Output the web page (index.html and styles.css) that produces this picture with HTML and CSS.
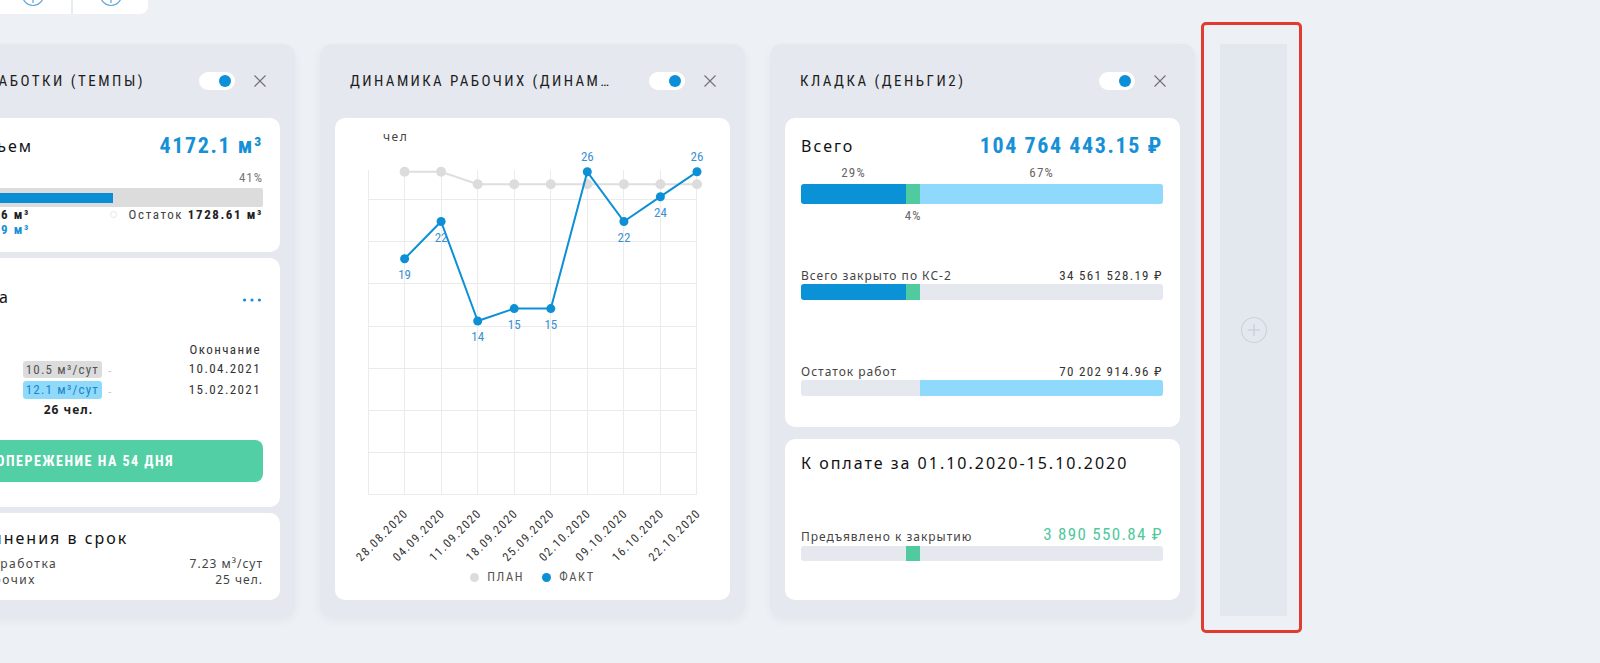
FILE: index.html
```html
<!DOCTYPE html>
<html lang="ru">
<head>
<meta charset="utf-8">
<title>Dashboard</title>
<link rel="stylesheet" href="styles.css">
</head>
<body>
<div class="toolbar">
  <div class="tb-btn tb-first">
    <svg width="24" height="24" viewBox="0 0 24 24"><circle cx="12" cy="12" r="10.5" fill="none" stroke="#5aa4d8" stroke-width="1.2"/><path d="M12 10v10" stroke="#5aa4d8" stroke-width="1.2"/></svg>
  </div>
  <div class="tb-sep"></div>
  <div class="tb-btn tb-second">
    <svg width="24" height="24" viewBox="0 0 24 24"><circle cx="12" cy="12" r="10.5" fill="none" stroke="#5aa4d8" stroke-width="1.2"/><path d="M12 10v10" stroke="#5aa4d8" stroke-width="1.2"/></svg>
  </div>
</div>

<main class="board">
  <!-- Widget 1 -->
  <section class="widget">
    <header class="w-head">
      <h2 class="w-title">ОБЪЕМ ВЫРАБОТКИ (ТЕМПЫ)</h2>
      <span class="toggle"><span class="knob"></span></span>
      <svg class="close" width="12" height="12" viewBox="0 0 12 12"><path d="M0.5 0.5L11.5 11.5M11.5 0.5L0.5 11.5" stroke="#707070" stroke-width="1.1"/></svg>
    </header>
    <div class="w-body">
      <div class="panel vol-panel">
        <div class="row-head">
          <span class="p-title">Общий объем</span>
          <span class="big-val">4172.1 м³</span>
        </div>
        <div class="pct-end">41%</div>
        <div class="vbar"><div class="vfill" style="width:58.6%"></div></div>
        <div class="vfoot">
          <div class="vf-left">
            <span class="vf-line">Выполнено <b>2443.46 м³</b></span>
            <span class="vf-line blue"><b>2443.49 м³</b></span>
          </div>
          <div class="vf-right">
            <span class="ring"></span>
            <span>Остаток <b>1728.61 м³</b></span>
          </div>
        </div>
      </div>

      <div class="panel plan-panel">
        <div class="row-head">
          <span class="p-title">Срок плана</span>
          <svg class="dots" width="18" height="4" viewBox="0 0 18 4"><circle cx="1.6" cy="2" r="1.6" fill="#1a8fd6"/><circle cx="9" cy="2" r="1.6" fill="#1a8fd6"/><circle cx="16.4" cy="2" r="1.6" fill="#1a8fd6"/></svg>
        </div>
        <div class="plan-grid">
          <span class="pg-label">Темп</span><span></span><span></span><span class="pg-date">Окончание</span>
          <span class="pg-label">План</span><span class="pill pill-gray">10.5 м³/сут</span><span class="pg-dash">-</span><span class="pg-date">10.04.2021</span>
          <span class="pg-label">Факт</span><span class="pill pill-blue">12.1 м³/сут</span><span class="pg-dash">-</span><span class="pg-date">15.02.2021</span>
          <span class="pg-label">Рабочих</span><span class="pg-people">26 чел.</span><span></span><span></span>
        </div>
        <div class="ahead-btn">ОПЕРЕЖЕНИЕ НА 54 ДНЯ</div>
      </div>

      <div class="panel need-panel">
        <div class="p-title">Для выполнения в срок</div>
        <div class="kv-list">
          <div class="kv-row"><span class="kv-key">Требуемая выработка</span><span>7.23 м³/сут</span></div>
          <div class="kv-row"><span class="kv-key">Требуется рабочих</span><span>25 чел.</span></div>
        </div>
      </div>
    </div>
  </section>

  <!-- Widget 2 -->
  <section class="widget">
    <header class="w-head">
      <h2 class="w-title w-title-long">ДИНАМИКА РАБОЧИХ (ДИНАМИКА)</h2>
      <span class="toggle"><span class="knob"></span></span>
      <svg class="close" width="12" height="12" viewBox="0 0 12 12"><path d="M0.5 0.5L11.5 11.5M11.5 0.5L0.5 11.5" stroke="#707070" stroke-width="1.1"/></svg>
    </header>
    <div class="w-body">
      <div class="panel chart-panel">
        <svg class="chart" width="395" height="452" viewBox="0 0 395 452">
          <text class="ax-unit" x="48" y="23">чел</text>
          <g class="grid" stroke="#ebebeb" stroke-width="1" shape-rendering="crispEdges">
            <line x1="33.5" y1="52" x2="33.5" y2="377"/>
            <line x1="69.5" y1="52" x2="69.5" y2="377"/>
            <line x1="106.5" y1="52" x2="106.5" y2="377"/>
            <line x1="142.5" y1="52" x2="142.5" y2="377"/>
            <line x1="179.5" y1="52" x2="179.5" y2="377"/>
            <line x1="215.5" y1="52" x2="215.5" y2="377"/>
            <line x1="252.5" y1="52" x2="252.5" y2="377"/>
            <line x1="288.5" y1="52" x2="288.5" y2="377"/>
            <line x1="325.5" y1="52" x2="325.5" y2="377"/>
            <line x1="361.5" y1="52" x2="361.5" y2="377"/>
            <line x1="33" y1="81.5" x2="362" y2="81.5"/>
            <line x1="33" y1="123.5" x2="362" y2="123.5"/>
            <line x1="33" y1="165.5" x2="362" y2="165.5"/>
            <line x1="33" y1="208.5" x2="362" y2="208.5"/>
            <line x1="33" y1="250.5" x2="362" y2="250.5"/>
            <line x1="33" y1="292.5" x2="362" y2="292.5"/>
            <line x1="33" y1="334.5" x2="362" y2="334.5"/>
            <line x1="33" y1="376.5" x2="362" y2="376.5"/>
          </g>
          <polyline points="69.6,53.8 106.1,53.8 142.7,66.3 179.2,66.3 215.8,66.3 252.3,66.3 288.9,66.3 325.4,66.3 362,66.3" fill="none" stroke="#dedede" stroke-width="2"/>
          <g fill="#dcdcdc">
            <circle cx="69.6" cy="53.8" r="5"/><circle cx="106.1" cy="53.8" r="5"/><circle cx="142.7" cy="66.3" r="5"/>
            <circle cx="179.2" cy="66.3" r="5"/><circle cx="215.8" cy="66.3" r="5"/><circle cx="252.3" cy="66.3" r="5"/>
            <circle cx="288.9" cy="66.3" r="5"/><circle cx="325.4" cy="66.3" r="5"/><circle cx="362" cy="66.3" r="5"/>
          </g>
          <polyline points="69.6,140.8 106.1,103.5 142.7,203 179.2,190.6 215.8,190.6 252.3,53.8 288.9,103.5 325.4,78.7 362,53.8" fill="none" stroke="#0d8fd6" stroke-width="2" stroke-linejoin="round"/>
          <g fill="#0d8fd6">
            <circle cx="69.6" cy="140.8" r="4.5"/><circle cx="106.1" cy="103.5" r="4.5"/><circle cx="142.7" cy="203" r="4.5"/>
            <circle cx="179.2" cy="190.6" r="4.5"/><circle cx="215.8" cy="190.6" r="4.5"/><circle cx="252.3" cy="53.8" r="4.5"/>
            <circle cx="288.9" cy="103.5" r="4.5"/><circle cx="325.4" cy="78.7" r="4.5"/><circle cx="362" cy="53.8" r="4.5"/>
          </g>
          <g class="val-labels" text-anchor="middle">
            <text x="69.6" y="161">19</text>
            <text x="106.1" y="123.6">22</text>
            <text x="142.7" y="223.1">14</text>
            <text x="179.2" y="210.7">15</text>
            <text x="215.8" y="210.7">15</text>
            <text x="252.3" y="42.9">26</text>
            <text x="288.9" y="123.6">22</text>
            <text x="325.4" y="98.8">24</text>
            <text x="362" y="42.9">26</text>
          </g>
          <g class="dates" text-anchor="end">
            <text x="74" y="396" transform="rotate(-45 74 396)">28.08.2020</text>
            <text x="110.6" y="396" transform="rotate(-45 110.6 396)">04.09.2020</text>
            <text x="147.2" y="396" transform="rotate(-45 147.2 396)">11.09.2020</text>
            <text x="183.7" y="396" transform="rotate(-45 183.7 396)">18.09.2020</text>
            <text x="220.3" y="396" transform="rotate(-45 220.3 396)">25.09.2020</text>
            <text x="256.8" y="396" transform="rotate(-45 256.8 396)">02.10.2020</text>
            <text x="293.4" y="396" transform="rotate(-45 293.4 396)">09.10.2020</text>
            <text x="329.9" y="396" transform="rotate(-45 329.9 396)">16.10.2020</text>
            <text x="366.5" y="396" transform="rotate(-45 366.5 396)">22.10.2020</text>
          </g>
        </svg>
        <div class="legend">
          <span class="lg-item"><span class="lg-dot lg-plan"></span>ПЛАН</span>
          <span class="lg-item"><span class="lg-dot lg-fact"></span>ФАКТ</span>
        </div>
      </div>
    </div>
  </section>

  <!-- Widget 3 -->
  <section class="widget">
    <header class="w-head">
      <h2 class="w-title">КЛАДКА (ДЕНЬГИ2)</h2>
      <span class="toggle"><span class="knob"></span></span>
      <svg class="close" width="12" height="12" viewBox="0 0 12 12"><path d="M0.5 0.5L11.5 11.5M11.5 0.5L0.5 11.5" stroke="#707070" stroke-width="1.1"/></svg>
    </header>
    <div class="w-body gap12">
      <div class="panel money-panel">
        <div class="row-head">
          <span class="p-title">Всего</span>
          <span class="big-val">104 764 443.15 ₽</span>
        </div>
        <div class="pct-row">
          <span style="width:29%">29%</span><span style="width:4%"></span><span style="width:67%">67%</span>
        </div>
        <div class="mbar mbar-lg">
          <span class="seg seg-blue" style="width:29%"></span><span class="seg seg-green" style="width:4%"></span><span class="seg seg-light" style="width:67%"></span>
        </div>
        <div class="pct-row pct-under">
          <span style="width:29%"></span><span style="width:4%">4%</span>
        </div>

        <div class="m-label m-first"><span>Всего закрыто по КС-2</span><span class="m-amount">34 561 528.19 ₽</span></div>
        <div class="mbar">
          <span class="seg seg-blue" style="width:29%"></span><span class="seg seg-green" style="width:4%"></span>
        </div>

        <div class="m-label m-second"><span>Остаток работ</span><span class="m-amount">70 202 914.96 ₽</span></div>
        <div class="mbar">
          <span class="seg" style="width:33%"></span><span class="seg seg-light" style="width:67%"></span>
        </div>
      </div>

      <div class="panel pay-panel">
        <div class="p-title">К оплате за 01.10.2020-15.10.2020</div>
        <div class="pay-row"><span class="pay-label">Предъявлено к закрытию</span><span class="pay-amount">3 890 550.84 ₽</span></div>
        <div class="mbar mbar-sm">
          <span class="seg" style="width:29%"></span><span class="seg seg-green" style="width:4%"></span>
        </div>
      </div>
    </div>
  </section>

  <!-- Add widget column -->
  <div class="add-col">
    <div class="add-panel">
      <svg width="28" height="28" viewBox="0 0 28 28"><circle cx="14" cy="14" r="12.5" fill="none" stroke="#cdd2db" stroke-width="1.1"/><path d="M8 14h12M14 8v12" stroke="#c6cbd4" stroke-width="1.1"/></svg>
    </div>
    <div class="drop-frame"></div>
  </div>
</main>
</body>
</html>
```

FILE: styles.css
```css
* { box-sizing: border-box; }

html, body {
  margin: 0;
  height: 100%;
}

body {
  background: #edf0f4;
  overflow: hidden;
  font-family: "Noto Sans", "Open Sans", sans-serif;
  color: #1d1d1f;
}

/* condensed family used for headings and numbers */
.w-title,
.big-val,
.pct-end,
.vfoot,
.pill,
.pg-date,
.ahead-btn,
.pct-row,
.m-amount,
.pay-amount,
.legend,
.val-labels,
.dates {
  font-family: "Roboto Condensed", "Liberation Sans Narrow", "DejaVu Sans Condensed", "Roboto", sans-serif;
  font-stretch: condensed;
}

/* ---------- top toolbar ---------- */
.toolbar {
  display: flex;
  width: 148px;
  height: 14px;
  background: #fff;
  border-radius: 0 0 8px 0;
  overflow: hidden;
}

.tb-btn {
  display: flex;
  justify-content: center;
  overflow: hidden;
}

.tb-btn svg {
  flex: none;
  margin-top: -17px;
}

.tb-first { width: 71px; padding-right: 5px; }
.tb-second { width: 75px; }

.tb-sep {
  width: 2px;
  background: #e8ebf0;
}

/* ---------- board ---------- */
.board {
  display: flex;
  align-items: flex-start;
  gap: 25px;
  margin: 30px 0 0 -130px;
}

.widget {
  flex: none;
  width: 425px;
  min-width: 0;
  height: 572px;
  display: flex;
  flex-direction: column;
  background: #e5e8ef;
  border-radius: 12px;
  padding: 0 15px 16px;
  box-shadow: 0 4px 8px rgba(60, 70, 100, 0.06);
}

.w-head {
  flex: none;
  height: 74px;
  display: flex;
  align-items: center;
  padding: 0 14px 0 15px;
  min-width: 0;
}

.w-title {
  flex: 1 1 0;
  min-width: 0;
  margin: 0 40px 0 0;
  font-size: 15px;
  font-weight: 400;
  line-height: 20px;
  letter-spacing: 2.5px;
  color: #1e1e1e;
  white-space: nowrap;
  overflow: hidden;
  text-overflow: ellipsis;
}

.w-title-long {
  margin-right: 38px;
  letter-spacing: 2.4px;
}

.toggle {
  flex: none;
  width: 36px;
  height: 18px;
  border-radius: 9px;
  background: #fff;
  display: flex;
  align-items: center;
  justify-content: flex-end;
  padding-right: 4px;
}

.knob {
  width: 12px;
  height: 12px;
  border-radius: 50%;
  background: #0b8fd8;
}

.close {
  flex: none;
  display: block;
  margin-left: 19px;
}

.w-body {
  flex: 1;
  min-height: 0;
  min-width: 0;
  display: flex;
  flex-direction: column;
  gap: 6px;
}

.w-body.gap12 { gap: 12px; }

.panel {
  background: #fff;
  border-radius: 10px;
  padding: 16px 17px 0 16px;
  min-width: 0;
}

.row-head {
  display: flex;
  align-items: center;
  justify-content: space-between;
  height: 24px;
}

.p-title {
  font-size: 16px;
  line-height: 24px;
  letter-spacing: 2px;
  color: #111;
  white-space: nowrap;
}

.big-val {
  font-size: 22px;
  font-weight: 700;
  line-height: 24px;
  letter-spacing: 1.6px;
  color: #1690d6;
  white-space: nowrap;
}

/* ---------- widget 1 ---------- */
.vol-panel { flex: none; height: 134px; }

.pct-end {
  margin-top: 13px;
  text-align: right;
  font-size: 13px;
  line-height: 14px;
  letter-spacing: 1px;
  color: #777;
}

.vbar {
  margin-top: 3px;
  height: 19px;
  background: #dcdcdc;
  border-radius: 2px;
  display: flex;
  align-items: center;
}

.vfill {
  height: 10px;
  background: #0a8fd6;
}

.vfoot {
  display: flex;
  justify-content: space-between;
  font-size: 13px;
  line-height: 15px;
  letter-spacing: 1.6px;
  color: #444;
}

.vfoot b { color: #222; }

.vf-left {
  width: 129px;
  display: flex;
  flex-direction: column;
  align-items: flex-end;
  white-space: nowrap;
}

.vf-line.blue b { color: #1690d6; }

.vf-right {
  display: flex;
  align-items: center;
  height: 15px;
  white-space: nowrap;
}

.ring {
  width: 7px;
  height: 7px;
  border-radius: 50%;
  border: 1px solid #e6e6e6;
  margin-right: 12px;
}

.plan-panel {
  flex: none;
  height: 249px;
  padding-top: 27px;
  padding-right: 19px;
}

.dots { display: block; margin-top: 6px; }

.plan-grid {
  margin-top: 34px;
  display: grid;
  grid-template-columns: 1fr auto 79px 80px;
  grid-template-rows: 14px 18px 18px 14px;
  row-gap: 3px;
  align-items: center;
}

.pg-label {
  font-size: 12px;
  letter-spacing: 1px;
  color: #444;
}

.pg-date {
  justify-self: end;
  font-size: 13px;
  line-height: 14px;
  letter-spacing: 1.4px;
  color: #333;
}

.pill {
  display: block;
  height: 18px;
  padding: 0 3px;
  border-radius: 3px;
  font-size: 13px;
  line-height: 18px;
  letter-spacing: 1.2px;
  white-space: nowrap;
}

.pill-gray { background: #dcdcdc; color: #555; height: 17px; line-height: 17px; }
.pill-blue { background: #8fd9fb; color: #1a86c8; }

.pg-dash {
  padding-left: 6px;
  font-size: 11px;
  color: #c8c8c8;
}

.pg-people {
  justify-self: center;
  padding-left: 12px;
  font-size: 12px;
  font-weight: 700;
  letter-spacing: 1px;
  color: #222;
  white-space: nowrap;
}

.ahead-btn {
  margin: 24px -2px 0 0;
  height: 42px;
  border-radius: 8px;
  background: #53cfa6;
  color: #fff;
  font-size: 14px;
  font-weight: 700;
  letter-spacing: 1.5px;
  display: flex;
  align-items: center;
  justify-content: center;
  white-space: nowrap;
  padding-left: 6px;
}

.need-panel {
  flex: 1;
  padding-top: 14px;
}

.need-panel .p-title { line-height: 22px; }

.kv-list { margin-top: 7px; }

.kv-row {
  display: flex;
  justify-content: space-between;
  font-size: 12px;
  line-height: 16px;
  letter-spacing: 1px;
  color: #444;
  white-space: nowrap;
}

.kv-key { letter-spacing: 1.5px; }

/* ---------- widget 2 (chart) ---------- */
.chart-panel {
  flex: 1;
  padding: 0;
}

.chart { display: block; }

.ax-unit {
  font-family: "Noto Sans", sans-serif;
  font-size: 12px;
  letter-spacing: 1.5px;
  fill: #444;
}

.val-labels text {
  font-size: 13px;
  fill: #3a8fd2;
}

.dates text {
  font-size: 12px;
  letter-spacing: 1.4px;
  fill: #333;
}

.legend {
  display: flex;
  justify-content: center;
  gap: 18px;
  height: 14px;
  font-size: 12.5px;
  line-height: 14px;
  letter-spacing: 1.6px;
  color: #555;
}

.lg-item {
  display: flex;
  align-items: center;
  gap: 8px;
}

.lg-dot {
  width: 9px;
  height: 9px;
  border-radius: 50%;
}

.lg-plan { background: #dcdcdc; }
.lg-fact { background: #0d8fd6; }

/* ---------- widget 3 (money) ---------- */
.money-panel { flex: none; height: 309px; }

.pct-row {
  display: flex;
  margin-top: 8px;
  font-size: 13px;
  line-height: 14px;
  letter-spacing: 1.2px;
  color: #666;
}

.pct-row span {
  display: flex;
  justify-content: center;
  white-space: nowrap;
}

.pct-row.pct-under { margin-top: 5px; }

.mbar {
  display: flex;
  height: 16px;
  margin-top: 2px;
  background: #e5e8ef;
  border-radius: 3px;
  overflow: hidden;
}

.mbar-lg { height: 20px; margin-top: 4px; }
.mbar-sm { height: 15px; }

.seg { display: block; height: 100%; }
.seg-blue { background: #0a91d6; }
.seg-green { background: #50cb9f; }
.seg-light { background: #8fdafc; }

.m-label {
  display: flex;
  justify-content: space-between;
  align-items: center;
  height: 14px;
  font-size: 12px;
  letter-spacing: 1px;
  color: #444;
  white-space: nowrap;
}

.m-first { margin-top: 45px; }
.m-second { margin-top: 64px; }

.m-amount {
  font-size: 13px;
  letter-spacing: 1.3px;
  color: #333;
}

.pay-panel { flex: 1; }

.pay-panel .p-title { line-height: 16px; }

.pay-row {
  margin-top: 53px;
  display: flex;
  justify-content: space-between;
  align-items: flex-end;
  white-space: nowrap;
}

.pay-label {
  font-size: 12px;
  line-height: 14px;
  letter-spacing: 1px;
  color: #444;
}

.pay-amount {
  font-size: 17px;
  line-height: 20px;
  letter-spacing: 1.3px;
  color: #4fc99c;
}

/* ---------- add column ---------- */
.add-col {
  flex: none;
  width: 67px;
  height: 572px;
  position: relative;
}

.add-panel {
  height: 100%;
  background: #e3e7ee;
  display: flex;
  align-items: center;
  justify-content: center;
}

.drop-frame {
  position: absolute;
  top: -22px;
  left: -19px;
  right: -15px;
  bottom: -17px;
  border: 3px solid #e23b30;
  border-radius: 5px;
}
```
